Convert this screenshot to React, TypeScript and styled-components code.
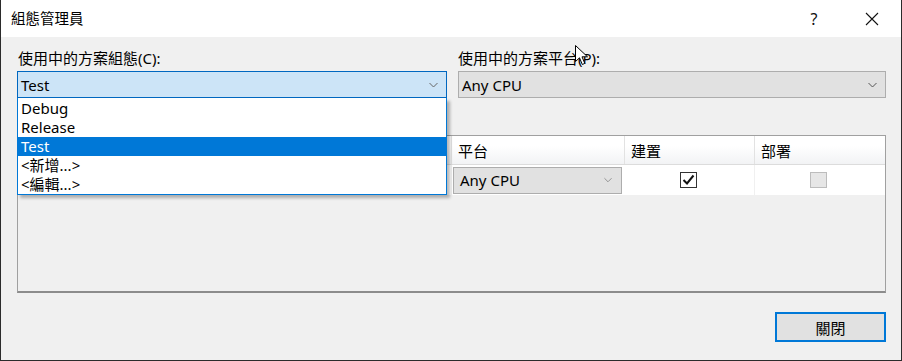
import styled, { createGlobalStyle } from 'styled-components';

const FONT = `"Segoe UI", "Noto Sans", "Noto Sans CJK TC", sans-serif`;
const BLUE = '#0078d7';

const Global = createGlobalStyle`
  html, body {
    margin: 0;
    padding: 0;
    background: #ffffff;
  }
  * {
    box-sizing: border-box;
  }
`;

const COLS = '234px 200px 173px 130px 130px';

const S = {
  Window: styled.div`
    position: relative;
    width: 902px;
    height: 361px;
    background: #f0f0f0;
    border: 1px solid #2b2b2b;
    border-top: none;
    font-family: ${FONT};
    color: #000;
    display: flex;
    flex-direction: column;
    overflow: hidden;
  `,
  TitleBar: styled.div`
    height: 37px;
    background: #ffffff;
    display: flex;
    align-items: center;
    padding-left: 10px;
    flex-shrink: 0;
  `,
  Title: styled.div`
    flex: 1;
    font-size: 14.5px;
    line-height: 20px;
    padding-bottom: 2px;
  `,
  CaptionButton: styled.div`
    width: 58px;
    height: 37px;
    display: flex;
    align-items: center;
    justify-content: center;
    font-size: 16px;
    color: #111;
  `,
  Body: styled.div`
    flex: 1;
    display: flex;
    flex-direction: column;
    padding: 11px 15px 0 16px;
  `,
  TopRow: styled.div`
    display: grid;
    grid-template-columns: 430px 428px;
    column-gap: 11px;
  `,
  Field: styled.div`
    display: flex;
    flex-direction: column;
    position: relative;
  `,
  Label: styled.div<{ $indent?: number }>`
    font-size: 15px;
    line-height: 20px;
    height: 20px;
    margin-bottom: 3px;
    padding-left: ${(p) => p.$indent ?? 1}px;
    white-space: nowrap;
  `,
  Combo: styled.div<{ $open?: boolean }>`
    height: 27px;
    display: flex;
    align-items: center;
    padding: 0 8px 0 3px;
    font-size: 15px;
    border: 1px solid ${(p) => (p.$open ? '#0067c0' : '#adadad')};
    background: ${(p) => (p.$open ? '#cce4f7' : '#e1e1e1')};
  `,
  ComboText: styled.span`
    flex: 1;
    line-height: 20px;
    white-space: nowrap;
  `,
  DropList: styled.div`
    position: absolute;
    top: 50px;
    left: 0;
    width: 430px;
    background: #ffffff;
    border: 1px solid ${BLUE};
    border-top: none;
    padding-top: 1px;
    box-shadow: 3px 3px 3px rgba(0, 0, 0, 0.28);
    z-index: 5;
  `,
  DropItem: styled.div<{ $selected?: boolean }>`
    height: 19px;
    line-height: 19px;
    font-size: 15px;
    padding-left: 3px;
    background: ${(p) => (p.$selected ? BLUE : 'transparent')};
    color: ${(p) => (p.$selected ? '#ffffff' : '#000000')};
    white-space: nowrap;
  `,
  Grid: styled.div`
    margin-top: 37px;
    height: 158px;
    border: 1px solid #a0a0a0;
    border-bottom: 2px solid #8c8c8c;
    background: #f0f0f0;
  `,
  HeaderRow: styled.div`
    display: grid;
    grid-template-columns: ${COLS};
    height: 29px;
    background: linear-gradient(#ffffff 35%, #f2f3f5);
    border-bottom: 1px solid #dcdcdc;
  `,
  HeaderCell: styled.div`
    display: flex;
    align-items: center;
    padding-left: 6px;
    font-size: 15px;
    border-right: 1px solid #e2e2e2;
    &:last-child {
      border-right: none;
    }
  `,
  DataRow: styled.div`
    display: grid;
    grid-template-columns: ${COLS};
    height: 30px;
    background: #ffffff;
  `,
  Cell: styled.div<{ $center?: boolean }>`
    display: flex;
    align-items: center;
    justify-content: ${(p) => (p.$center ? 'center' : 'flex-start')};
    padding: ${(p) => (p.$center ? '0' : '0 0 0 6px')};
    font-size: 15px;
    border-right: 1px solid #f0f0f0;
    &:last-child {
      border-right: none;
    }
  `,
  ComboCell: styled.div`
    display: flex;
    align-items: center;
    padding: 0 3px 0 1px;
  `,
  CellCombo: styled.div`
    flex: 1;
    height: 27px;
    display: flex;
    align-items: center;
    padding: 0 9px 0 6px;
    font-size: 15px;
    border: 1px solid #adadad;
    background: #e1e1e1;
  `,
  CheckBox: styled.div<{ $disabled?: boolean }>`
    width: 17px;
    height: 16px;
    margin-right: ${(p) => (p.$disabled ? 4 : 2)}px;
    border: 1px solid ${(p) => (p.$disabled ? '#bcbcbc' : '#333333')};
    background: ${(p) => (p.$disabled ? '#e6e6e6' : '#ffffff')};
    display: flex;
    align-items: center;
    justify-content: center;
  `,
  Footer: styled.div`
    display: flex;
    justify-content: flex-end;
    padding-top: 19px;
  `,
  Button: styled.div`
    width: 111px;
    height: 30px;
    display: flex;
    align-items: center;
    justify-content: center;
    font-size: 15px;
    background: #e1e1e1;
    border: 2px solid ${BLUE};
  `,
  Cursor: styled.svg`
    position: absolute;
    left: 574px;
    top: 45px;
    z-index: 10;
  `,
};

const Chevron = ({ color = '#555555', w = 9 }: { color?: string; w?: number }) => (
  <svg width={w} height={6} viewBox='0 0 9 6'>
    <path d='M0.5 1 L4.5 5 L8.5 1' fill='none' stroke={color} strokeWidth='1' />
  </svg>
);

const configs = ['Debug', 'Release', 'Test', '<新增...>', '<編輯...>'];

const App = () => {
  return (
    <>
      <Global />
      <S.Window>
        <S.TitleBar>
          <S.Title>組態管理員</S.Title>
          <S.CaptionButton>?</S.CaptionButton>
          <S.CaptionButton>
            <svg width='14' height='14' viewBox='0 0 14 14'>
              <path d='M1 1 L13 13 M13 1 L1 13' stroke='#111' strokeWidth='1.1' fill='none' />
            </svg>
          </S.CaptionButton>
        </S.TitleBar>
        <S.Body>
          <S.TopRow>
            <S.Field>
              <S.Label $indent={1}>使用中的方案組態(C):</S.Label>
              <S.Combo $open>
                <S.ComboText>Test</S.ComboText>
                <Chevron color='#666666' />
              </S.Combo>
              <S.DropList>
                {configs.map((c) => (
                  <S.DropItem key={c} $selected={c === 'Test'}>
                    {c}
                  </S.DropItem>
                ))}
              </S.DropList>
            </S.Field>
            <S.Field>
              <S.Label $indent={0}>使用中的方案平台(P):</S.Label>
              <S.Combo>
                <S.ComboText>Any CPU</S.ComboText>
                <Chevron color='#555555' />
              </S.Combo>
            </S.Field>
          </S.TopRow>

          <S.Grid>
            {/* first two columns sit under the open drop-down list */}
            <S.HeaderRow>
              <S.HeaderCell />
              <S.HeaderCell />
              <S.HeaderCell>平台</S.HeaderCell>
              <S.HeaderCell>建置</S.HeaderCell>
              <S.HeaderCell>部署</S.HeaderCell>
            </S.HeaderRow>
            <S.DataRow>
              <S.Cell />
              <S.Cell />
              <S.ComboCell>
                <S.CellCombo>
                  <S.ComboText>Any CPU</S.ComboText>
                  <Chevron color='#888888' w={8} />
                </S.CellCombo>
              </S.ComboCell>
              <S.Cell $center>
                <S.CheckBox>
                  <svg width='13' height='12' viewBox='0 0 13 12'>
                    <path d='M1.5 6 L5 9.5 L11.5 1.5' fill='none' stroke='#111' strokeWidth='2' />
                  </svg>
                </S.CheckBox>
              </S.Cell>
              <S.Cell $center>
                <S.CheckBox $disabled />
              </S.Cell>
            </S.DataRow>
          </S.Grid>

          <S.Footer>
            <S.Button>關閉</S.Button>
          </S.Footer>
        </S.Body>

        <S.Cursor width='14' height='22' viewBox='0 0 14 22'>
          <path
            d='M0.5 0.5 L0.5 16.5 L4.5 12.8 L7.3 19.5 L9.8 18.4 L7 11.8 L12.5 11.8 Z'
            fill='#ffffff'
            stroke='#000000'
            strokeWidth='1'
            strokeLinejoin='round'
          />
        </S.Cursor>
      </S.Window>
    </>
  );
};

export default App;
